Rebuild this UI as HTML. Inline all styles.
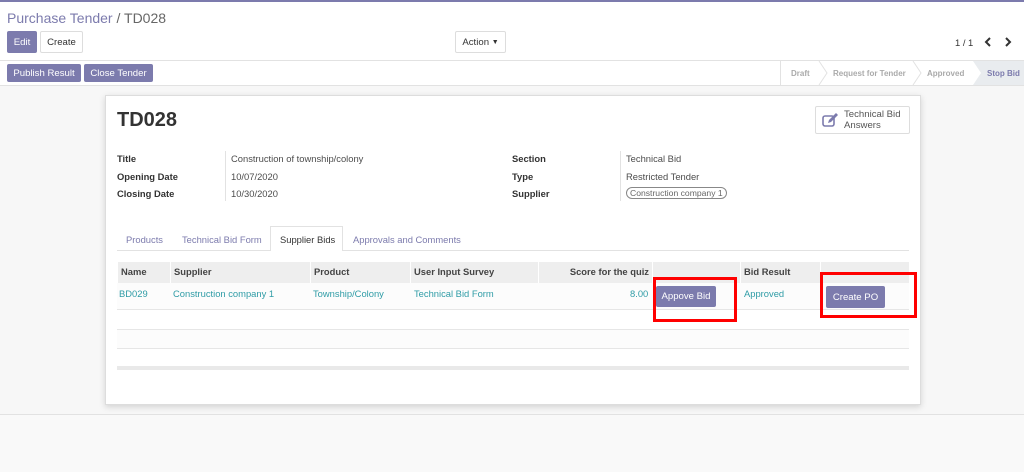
<!DOCTYPE html>
<html><head><style>
*{box-sizing:border-box;margin:0;padding:0}
body{width:1024px;height:472px;position:relative;font-family:"Liberation Sans",sans-serif;font-size:9.4px;color:#4c4c4c;background:#fff;overflow:hidden}
.a{position:absolute;white-space:nowrap}
.btnp{position:absolute;background:#7c7bad;color:#fff;border-radius:2px;display:flex;align-items:center;justify-content:center;font-size:9.6px;white-space:nowrap}
.btnw{position:absolute;background:#fff;border:1px solid #ddd;border-radius:2px;display:flex;align-items:center;justify-content:center;color:#333;font-size:9.6px;white-space:nowrap}
.lbl{position:absolute;font-weight:bold;color:#333;font-size:9.4px;top:0;left:0;white-space:nowrap}
.val{position:absolute;font-size:9.4px;color:#4c4c4c;white-space:nowrap}
.th{position:absolute;top:262px;height:21px;line-height:19px;font-weight:bold;color:#444;border-left:1px solid #fff;padding-left:3px;white-space:nowrap}
.td{position:absolute;top:288px;color:#2f9ca6;white-space:nowrap}
</style></head><body>
<div class="a" style="left:0;top:0;width:1024px;height:2px;background:#7c7bad"></div>
<div class="a" style="left:7px;top:10px;font-size:14px;color:#7c7bad">Purchase Tender <span style="color:#666">/ TD028</span></div>
<div class="btnp" style="left:7px;top:31px;width:30px;height:22px">Edit</div>
<div class="btnw" style="left:40px;top:31px;width:43px;height:22px">Create</div>
<div class="btnw" style="left:455px;top:31px;width:51px;height:22px">Action&nbsp;<span style="font-size:7px">▼</span></div>
<div class="a" style="left:955px;top:37px;color:#333">1 / 1</div>
<svg class="a" style="left:984px;top:37px" width="8" height="10" viewBox="0 0 8 10"><path d="M6 1L2 5l4 4" fill="none" stroke="#333" stroke-width="2"/></svg>
<svg class="a" style="left:1004px;top:37px" width="8" height="10" viewBox="0 0 8 10"><path d="M2 1l4 4-4 4" fill="none" stroke="#333" stroke-width="2"/></svg>
<div class="a" style="left:0;top:60px;width:1024px;height:1px;background:#e2e2e2"></div>
<div class="btnp" style="left:7px;top:64px;width:74px;height:18px">Publish Result</div>
<div class="btnp" style="left:84px;top:64px;width:69px;height:18px">Close Tender</div>
<div class="a" style="left:780px;top:61px;width:244px;height:24px;border-left:1px solid #e2e2e2;font-size:8px;color:#aaa;font-weight:bold">
<svg class="a" style="left:37px;top:0" width="10" height="24"><path d="M1 0l8 12-8 12" fill="none" stroke="#e2e2e2"/></svg>
<svg class="a" style="left:131px;top:0" width="10" height="24"><path d="M1 0l8 12-8 12" fill="none" stroke="#e2e2e2"/></svg>
<span class="a" style="left:10px;top:8px">Draft</span>
<span class="a" style="left:52px;top:8px">Request for Tender</span>
<span class="a" style="left:146px;top:8px">Approved</span>
<div class="a" style="left:192px;top:0;width:52px;height:24px;background:#e9ecef;clip-path:polygon(0 0,100% 0,100% 100%,0 100%,8px 50%)"></div>
<span class="a" style="left:206px;top:8px;color:#7c7bad">Stop Bid</span>
</div>
<div class="a" style="left:0;top:85px;width:1024px;height:330px;background:#f7f7f7;border-top:1px solid #e2e2e2;border-bottom:1px solid #e2e2e2"></div>
<div class="a" style="left:0;top:415px;width:1024px;height:57px;background:#f9f9f9"></div>
<div class="a" style="left:105px;top:95px;width:816px;height:310px;background:#fff;border:1px solid #ddd;box-shadow:0 2px 6px rgba(0,0,0,.15)"></div>
<div class="a" style="left:117px;top:109px;font-size:20px;font-weight:bold;color:#333">TD028</div>
<div class="btnw" style="left:815px;top:106px;width:95px;height:28px;justify-content:flex-start;padding-left:6px;color:#555">
<svg width="17" height="15" viewBox="0 0 17 15"><rect x="1" y="3" width="11" height="10" rx="2" fill="none" stroke="#7c7bad" stroke-width="1.6"/><path d="M6 10l1-3 7-7 2 2-7 7z" fill="#7c7bad"/></svg>
<span style="margin-left:5px;line-height:11px">Technical Bid<br>Answers</span></div>
<div class="lbl" style="left:117px;top:153px">Title</div>
<div class="lbl" style="left:117px;top:171px">Opening Date</div>
<div class="lbl" style="left:117px;top:188px">Closing Date</div>
<div class="a" style="left:225px;top:151px;width:1px;height:50px;background:#e2e2e2"></div>
<div class="val" style="left:231px;top:153px">Construction of township/colony</div>
<div class="val" style="left:231px;top:171px">10/07/2020</div>
<div class="val" style="left:231px;top:188px">10/30/2020</div>
<div class="lbl" style="left:512px;top:153px">Section</div>
<div class="lbl" style="left:512px;top:171px">Type</div>
<div class="lbl" style="left:512px;top:188px">Supplier</div>
<div class="a" style="left:620px;top:151px;width:1px;height:50px;background:#e2e2e2"></div>
<div class="val" style="left:626px;top:153px">Technical Bid</div>
<div class="val" style="left:626px;top:171px">Restricted Tender</div>
<div class="val" style="left:626px;top:187px;border:1.5px solid #888;border-radius:7px;padding:0 3px;font-size:8.6px;color:#666">Construction company 1</div>
<div class="a" style="left:117px;top:250px;width:792px;height:1px;background:#e2e2e2"></div>
<div class="a" style="left:270px;top:226px;width:73px;height:25px;background:#fff;border:1px solid #e2e2e2;border-bottom:none"></div>
<div class="a" style="left:126px;top:234px;color:#7c7bad">Products</div>
<div class="a" style="left:182px;top:234px;color:#7c7bad">Technical Bid Form</div>
<div class="a" style="left:280px;top:234px;color:#333">Supplier Bids</div>
<div class="a" style="left:353px;top:234px;color:#7c7bad">Approvals and Comments</div>
<div class="a" style="left:117px;top:262px;width:792px;height:21px;background:#eee"></div>
<div class="th" style="left:117px;width:53px">Name</div>
<div class="th" style="left:170px;width:140px">Supplier</div>
<div class="th" style="left:310px;width:100px">Product</div>
<div class="th" style="left:410px;width:128px">User Input Survey</div>
<div class="th" style="left:538px;width:114px;text-align:right;padding-right:3px">Score for the quiz</div>
<div class="th" style="left:652px;width:88px"></div>
<div class="th" style="left:740px;width:80px">Bid Result</div>
<div class="th" style="left:820px;width:89px"></div>
<div class="a" style="left:117px;top:283px;width:792px;height:27px;background:#fcfcfc;border-bottom:1px solid #e6e6e6"></div>
<div class="td" style="left:119px">BD029</div>
<div class="td" style="left:173px">Construction company 1</div>
<div class="td" style="left:313px">Township/Colony</div>
<div class="td" style="left:414px">Technical Bid Form</div>
<div class="td" style="left:630px">8.00</div>
<div class="td" style="left:744px">Approved</div>
<div class="btnp" style="left:656px;top:286px;width:60px;height:21px">Appove Bid</div>
<div class="btnp" style="left:826px;top:286px;width:59px;height:22px">Create PO</div>
<div class="a" style="left:117px;top:329px;width:792px;height:1px;background:#e6e6e6"></div>
<div class="a" style="left:117px;top:330px;width:792px;height:18px;background:#fcfcfc"></div>
<div class="a" style="left:117px;top:348px;width:792px;height:1px;background:#e6e6e6"></div>
<div class="a" style="left:117px;top:366px;width:792px;height:4px;background:#e9e9e9"></div>
<div class="a" style="left:653px;top:277px;width:84px;height:45px;border:3px solid #f00"></div>
<div class="a" style="left:820px;top:272px;width:97px;height:46px;border:3px solid #f00"></div>
</body></html>
